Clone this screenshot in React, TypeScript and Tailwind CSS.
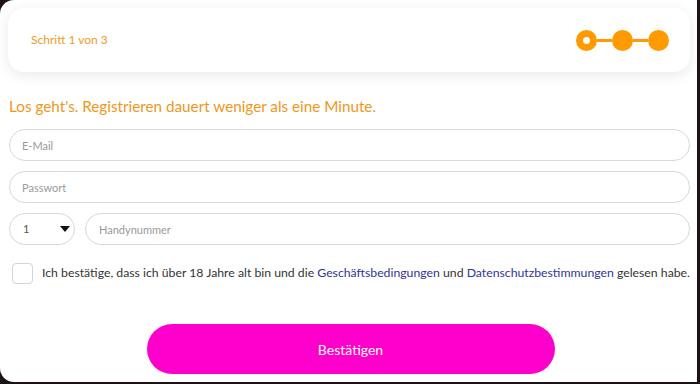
import React from "react";

function Steps() {
  return (
    <div className="flex items-center">
      <div className="flex h-[21px] w-[21px] items-center justify-center rounded-full bg-[#ff9a00]">
        <div className="h-[7px] w-[7px] rounded-full bg-white" />
      </div>
      <div className="h-[3px] w-[15px] bg-[#ff9a00]" />
      <div className="h-[21px] w-[21px] rounded-full bg-[#ff9a00]" />
      <div className="h-[3px] w-[15px] bg-[#ff9a00]" />
      <div className="h-[21px] w-[21px] rounded-full bg-[#ff9a00]" />
    </div>
  );
}

export default function App() {
  return (
    <div className="h-[384px] w-[700px] bg-[#1c1218] font-['Lato','Noto_Sans',sans-serif]">
      <div className="flex h-[382px] w-[697px] flex-col rounded-l-[14px] bg-white pl-[8px] pr-[7px] pt-[8px]">
        {/* Kopf */}
        <div className="flex h-[64px] items-center justify-between rounded-[16px] bg-white pl-[23px] pr-[21px] shadow-[0_3px_14px_rgba(0,0,0,0.09)]">
          <span className="text-[12px] text-[#ee9a2a]">Schritt 1 von 3</span>
          <Steps />
        </div>

        <h1 className="mt-[24px] pl-px text-[15.25px] leading-[20px] text-[#f0971b]">
          Los geht's. Registrieren dauert weniger als eine Minute.
        </h1>

        <div className="mt-[13px] flex flex-col gap-[10px] pl-px">
          <input
            placeholder="E-Mail"
            className="h-[32px] w-full rounded-full border border-[#d9d9d9] px-[12px] text-[11px] outline-none placeholder:text-[#9a9a9a]"
          />
          <input
            placeholder="Passwort"
            className="h-[32px] w-full rounded-full border border-[#d9d9d9] px-[12px] text-[11px] outline-none placeholder:text-[#9a9a9a]"
          />
          <div className="flex gap-[10px]">
            <div className="flex h-[32px] w-[66px] items-center justify-between rounded-full border border-[#d9d9d9] pl-[13px] pr-[4px] text-[11px] text-[#555]">
              <span>1</span>
              <svg width="10" height="6" viewBox="0 0 10 6">
                <path d="M0 0h10L5 6z" fill="#111" />
              </svg>
            </div>
            <input
              placeholder="Handynummer"
              className="h-[32px] flex-1 rounded-full border border-[#d9d9d9] px-[13px] text-[11px] outline-none placeholder:text-[#9a9a9a]"
            />
          </div>
        </div>

        <label className="mt-[18px] flex items-center gap-[9px] pl-[4px]">
          <span className="h-[21px] w-[21px] rounded-[4px] border border-[#d4d4d4] bg-white" />
          <span className="whitespace-nowrap text-[12.25px] text-[#333]">
            Ich bestätige, dass ich über 18 Jahre alt bin und die{" "}
            <a className="text-[#2f3597]">Geschäftsbedingungen</a> und{" "}
            <a className="text-[#2f3597]">Datenschutzbestimmungen</a> gelesen habe.
          </span>
        </label>

        <div className="mt-[40px] flex justify-center pl-[3px]">
          <button className="h-[50px] w-[408px] rounded-full bg-[#ff00cc] text-[14px] text-white">
            Bestätigen
          </button>
        </div>
      </div>
    </div>
  );
}
